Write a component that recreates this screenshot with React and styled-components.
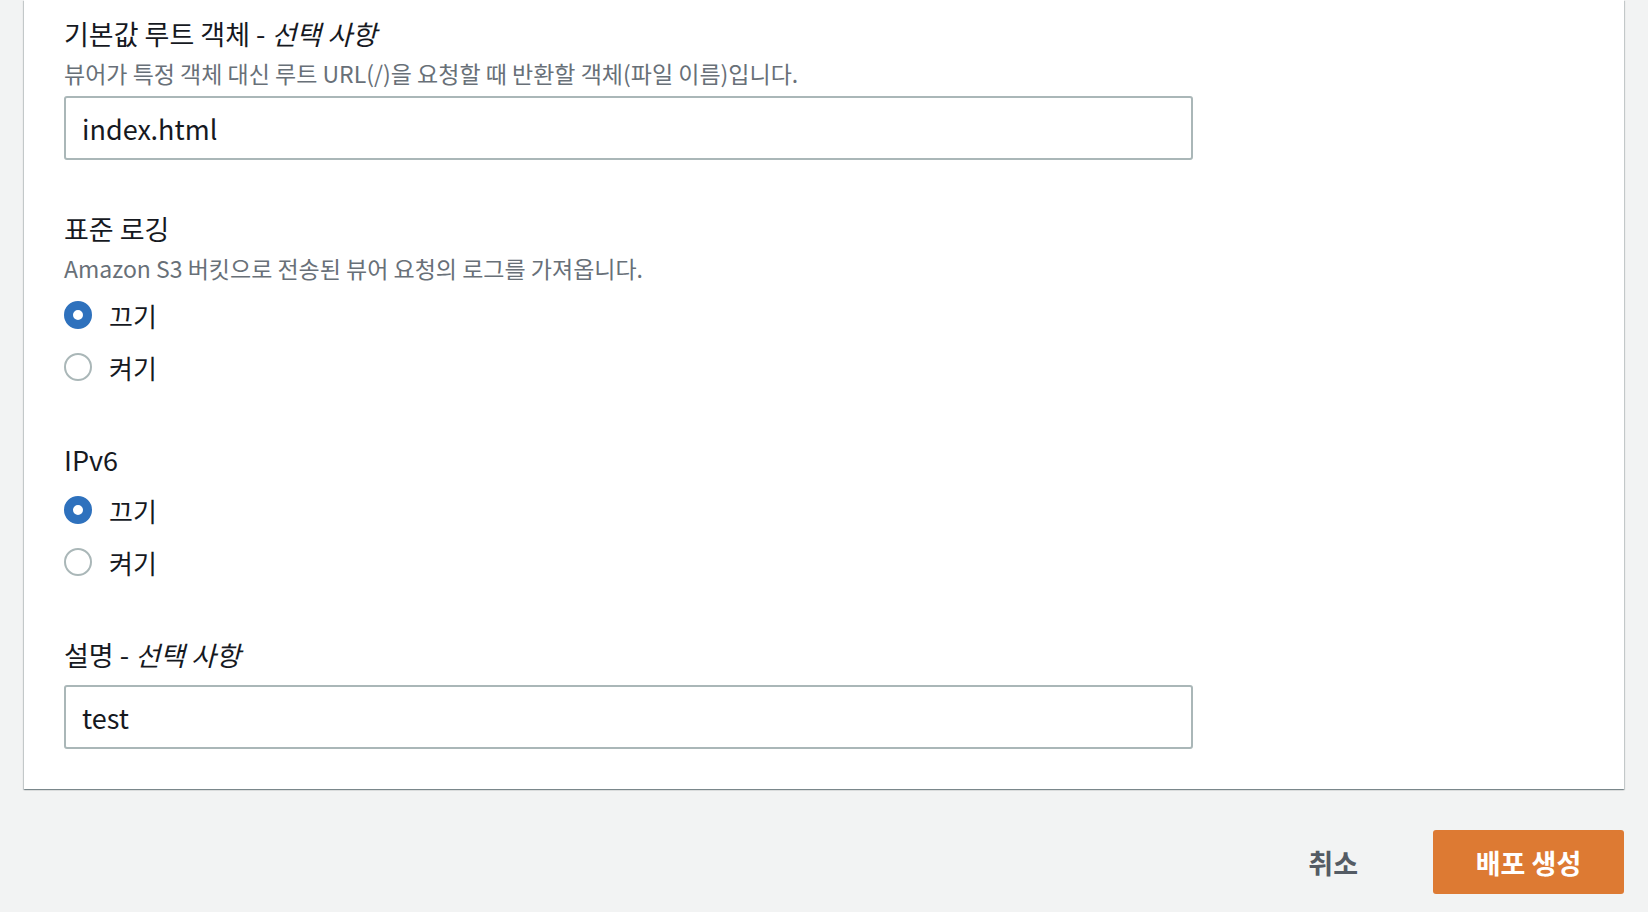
import React from "react";
import styled, { createGlobalStyle } from "styled-components";

const GlobalStyle = createGlobalStyle`
  html, body {
    margin: 0;
    padding: 0;
    background: #f2f3f3;
  }
  body {
    font-family: "Noto Sans CJK KR", "Open Sans", sans-serif;
    color: #16191f;
  }
`;

function RadioOption({ label, checked }) {
  return (
    <RadioRow>
      <RadioCircle $checked={checked} />
      <RadioLabel>{label}</RadioLabel>
    </RadioRow>
  );
}

function App() {
  return (
    <Page>
      <GlobalStyle />
      <Card>
        <Field>
          <Label>
            기본값 루트 객체 - <Optional>선택 사항</Optional>
          </Label>
          <Description>
            뷰어가 특정 객체 대신 루트 URL(/)을 요청할 때 반환할 객체(파일 이름)입니다.
          </Description>
          <Input defaultValue="index.html" />
        </Field>

        <Field>
          <Label>표준 로깅</Label>
          <Description>
            Amazon S3 버킷으로 전송된 뷰어 요청의 로그를 가져옵니다.
          </Description>
          <RadioGroup>
            <RadioOption label="끄기" checked />
            <RadioOption label="켜기" />
          </RadioGroup>
        </Field>

        <Field>
          <Label>IPv6</Label>
          <RadioGroup>
            <RadioOption label="끄기" checked />
            <RadioOption label="켜기" />
          </RadioGroup>
        </Field>

        <Field>
          <Label $tight>
            설명 - <Optional>선택 사항</Optional>
          </Label>
          <Input defaultValue="test" />
        </Field>
      </Card>

      <Footer>
        <LinkButton>취소</LinkButton>
        <PrimaryButton>배포 생성</PrimaryButton>
      </Footer>
    </Page>
  );
}

const Page = styled.div`
  padding: 0 24px;
  min-height: 912px;
  box-sizing: border-box;
`;

const Card = styled.div`
  background: #ffffff;
  padding: 17px 40px 38px;
  display: flex;
  flex-direction: column;
  gap: 50px;
  box-shadow: 0 1px 1px 0 rgba(0, 28, 36, 0.3),
    1px 1px 1px 0 rgba(0, 28, 36, 0.15),
    -1px 1px 1px 0 rgba(0, 28, 36, 0.15);
`;

const Field = styled.div`
  display: flex;
  flex-direction: column;
  width: 1129px;
`;

const Label = styled.div`
  font-size: 27px;
  line-height: 34px;
  color: #16191f;
  margin-bottom: ${(p) => (p.$tight ? "11px" : "7px")};
`;

const Optional = styled.span`
  font-style: italic;
`;

const Description = styled.div`
  font-size: 23px;
  line-height: 30px;
  color: #687078;
  margin-bottom: 6px;
`;

const Input = styled.input`
  box-sizing: border-box;
  width: 100%;
  height: 64px;
  margin: 2px 0 2px;
  border: 2px solid #aab7b8;
  border-radius: 3px;
  padding: 0 16px;
  font-family: "Noto Sans CJK KR", "Open Sans", sans-serif;
  font-size: 27px;
  color: #16191f;
  background: #ffffff;
  outline: none;
`;

const RadioGroup = styled.div`
  display: flex;
  flex-direction: column;
`;

const RadioRow = styled.label`
  display: flex;
  align-items: center;
  height: 52px;
  gap: 17px;
`;

const RadioCircle = styled.span`
  box-sizing: border-box;
  width: 28px;
  height: 28px;
  border-radius: 50%;
  flex: none;
  background: #ffffff;
  border: ${(p) => (p.$checked ? "9px solid #2e71bd" : "2px solid #aab7b8")};
`;

const RadioLabel = styled.span`
  font-size: 26px;
  color: #16191f;
`;

const Footer = styled.div`
  display: flex;
  justify-content: flex-end;
  align-items: center;
  gap: 75px;
  padding-top: 41px;
`;

const LinkButton = styled.button`
  border: none;
  background: none;
  padding: 0;
  font-family: "Noto Sans CJK KR", sans-serif;
  font-weight: 700;
  font-size: 27px;
  color: #545b64;
  cursor: pointer;
`;

const PrimaryButton = styled.button`
  width: 191px;
  height: 64px;
  border: none;
  border-radius: 3px;
  background: #dd7a33;
  color: #ffffff;
  font-family: "Noto Sans CJK KR", sans-serif;
  font-weight: 700;
  font-size: 27px;
  cursor: pointer;
`;

export default App;
